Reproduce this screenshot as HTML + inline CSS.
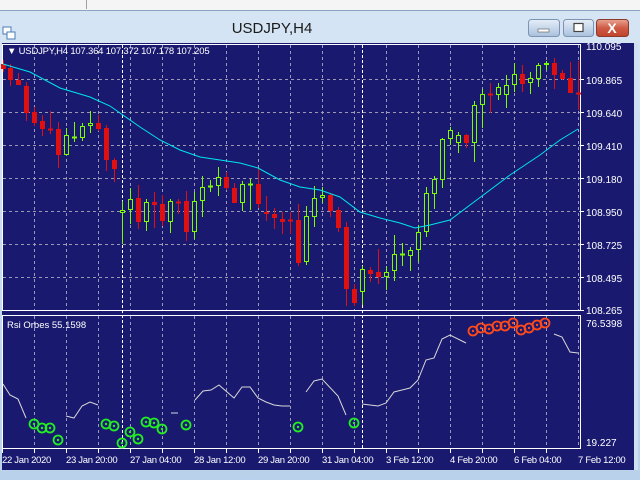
<!DOCTYPE html>
<html><head><meta charset="utf-8"><style>
html,body{margin:0;padding:0;width:640px;height:480px;overflow:hidden;background:#f0f0f0;font-family:"Liberation Sans",sans-serif}
svg{position:absolute;left:0;top:0}
</style></head><body>
<svg id="s" width="640" height="480" xmlns="http://www.w3.org/2000/svg" font-family="Liberation Sans, sans-serif">
<defs>
<linearGradient id="tb" x1="0" y1="0" x2="0" y2="1"><stop offset="0" stop-color="#d6e5f4"/><stop offset="1" stop-color="#b9d1ea"/></linearGradient>
<linearGradient id="bt" x1="0" y1="0" x2="0" y2="1"><stop offset="0" stop-color="#e6eef8"/><stop offset="1" stop-color="#a9c1dd"/></linearGradient>
<linearGradient id="cl" x1="0" y1="0" x2="0" y2="1"><stop offset="0" stop-color="#e8a593"/><stop offset="0.5" stop-color="#cf5b45"/><stop offset="1" stop-color="#c0432c"/></linearGradient>
</defs>
<rect x="0" y="0" width="640" height="10" fill="#f5f5f5"/>
<line x1="86.5" y1="0" x2="86.5" y2="9" stroke="#a0a0a0"/>
<rect x="0" y="10" width="640" height="470" fill="url(#tb)"/>
<line x1="0" y1="10.5" x2="640" y2="10.5" stroke="#8aa4c2"/>
<g transform="translate(3,27)">
<rect x="0" y="0" width="8" height="7" fill="#fff" stroke="#4a7bb5" stroke-width="1"/>
<rect x="4" y="5" width="8" height="7" fill="#fff" stroke="#4a7bb5" stroke-width="1"/>
</g>
<text x="272" y="33" font-size="15" fill="#1a1a1a" text-anchor="middle">USDJPY,H4</text>
<rect x="528.5" y="19.5" width="31" height="17" rx="3" fill="url(#bt)" stroke="#7c93b2"/>
<rect x="538" y="29" width="11" height="3" fill="#fff" stroke="#555" stroke-width="0.6"/>
<rect x="563.5" y="19.5" width="30" height="17" rx="3" fill="url(#bt)" stroke="#7c93b2"/>
<rect x="574" y="23.5" width="9" height="8" fill="#fff" stroke="#444" stroke-width="1.2"/>
<rect x="596.5" y="19.5" width="32" height="17" rx="3" fill="url(#cl)" stroke="#8b3a2c"/>
<text x="612" y="33" font-size="14" font-weight="bold" fill="#fff" text-anchor="middle">X</text>
<rect x="2" y="43" width="632" height="427" fill="#191970"/>
<rect x="634" y="43" width="4" height="427" fill="#cfe0f1"/>
<g id="grid"></g>
<rect x="2.5" y="44.5" width="578" height="266" fill="none" stroke="#ffffff" stroke-width="1"/>
<rect x="2.5" y="315.5" width="578" height="133" fill="none" stroke="#ffffff" stroke-width="1"/>
<g id="main"></g>
<g id="ind"></g>
<g fill="#fff" font-size="10">
<text x="7" y="54" font-size="9.5" letter-spacing="-0.2">▼ USDJPY,H4  107.364 107.372 107.178 107.205</text>
<text x="586" y="50">110.095</text>
<text x="586" y="84">109.865</text>
<text x="586" y="117">109.640</text>
<text x="586" y="150">109.410</text>
<text x="586" y="183">109.180</text>
<text x="586" y="216">108.950</text>
<text x="586" y="249">108.725</text>
<text x="586" y="282">108.495</text>
<text x="586" y="314">108.265</text>
<text x="586" y="327">76.5398</text>
<text x="586" y="446">19.227</text>
<text x="7" y="328" font-size="9.5">Rsi Orbes 55.1598</text>
<g font-size="9.5" letter-spacing="-0.3">
<text x="2" y="463">22 Jan 2020</text>
<text x="66" y="463">23 Jan 20:00</text>
<text x="130" y="463">27 Jan 04:00</text>
<text x="194" y="463">28 Jan 12:00</text>
<text x="258" y="463">29 Jan 20:00</text>
<text x="322" y="463">31 Jan 04:00</text>
<text x="386" y="463">3 Feb 12:00</text>
<text x="450" y="463">4 Feb 20:00</text>
<text x="514" y="463">6 Feb 04:00</text>
<text x="578" y="463">7 Feb 12:00</text>
</g>
</g>
</svg>
<script>
var NS="http://www.w3.org/2000/svg";
function el(p,t,a){var e=document.createElementNS(NS,t);for(var k in a)e.setAttribute(k,a[k]);document.getElementById(p).appendChild(e);return e;}
for(var x=34;x<=578;x+=32){
 el("grid","line",{x1:x+.5,y1:45,x2:x+.5,y2:310,stroke:"#9a9ab4","stroke-dasharray":"3,3"});
 el("grid","line",{x1:x+.5,y1:316,x2:x+.5,y2:448,stroke:"#9a9ab4","stroke-dasharray":"3,3"});
 el("grid","line",{x1:x-31.5,y1:449,x2:x-31.5,y2:453,stroke:"#fff"});
}
[79,112,145,178,211,244,277,310].forEach(function(y){el("grid","line",{x1:3,y1:y+.5,x2:580,y2:y+.5,stroke:"#9a9ab4","stroke-dasharray":"3,3"});
el("grid","line",{x1:580,y1:y+.5,x2:584,y2:y+.5,stroke:"#fff"});});
[122,362].forEach(function(x){el("grid","line",{x1:x+.5,y1:45,x2:x+.5,y2:448,stroke:"#fff","stroke-dasharray":"3,2"});});
var C=[[3,'r',64,69,60,72],[10,'r',68,80,64,86],[18,'r',80,85,73,85],[26,'r',86,113,82,121],[34,'r',112,123,107,126],[42,'r',121,129,115,136],[50,'r',129,129,111,134],[58,'r',129,155,122,168],[66,'g',135,155,128,155],[74,'g',137,137,122,142],[82,'g',126,138,123,141],[90,'g',123,126,111,133],[98,'r',123,129,115,131],[106,'r',128,160,125,171],[114,'r',160,169,158,182],[122,'g',210,213,201,244],[130,'g',199,210,188,224],[138,'r',198,222,185,229],[146,'g',202,222,199,231],[154,'r',202,205,192,228],[162,'r',204,221,195,226],[170,'g',201,222,199,233],[178,'r',202,202,199,214],[186,'r',201,232,191,241],[194,'g',201,232,192,239],[202,'g',187,201,176,217],[210,'g',186,186,180,192],[218,'g',177,186,167,196],[226,'r',177,188,172,190],[234,'r',188,203,183,203],[242,'g',184,203,181,211],[250,'g',184,184,179,210],[258,'r',184,204,168,208],[266,'r',212,214,196,221],[274,'r',214,218,208,229],[282,'r',219,222,212,234],[290,'r',220,220,212,234],[298,'r',220,263,204,266],[306,'g',216,262,206,265],[314,'g',198,217,186,227],
[322,'g',195,198,187,203],[330,'r',195,211,193,217],[338,'r',210,228,207,232],[346,'r',227,289,222,306],[354,'r',289,303,284,306],[362,'g',269,292,266,305],[370,'r',270,274,267,282],[378,'r',272,277,249,284],[386,'g',272,277,266,290],[394,'g',254,271,235,281],[402,'g',254,254,243,266],[410,'g',250,256,247,271],[418,'g',232,250,225,262],[426,'g',193,232,187,237],[434,'g',179,194,176,209],[442,'g',139,180,138,188],[450,'g',130,139,127,145],[458,'g',135,143,132,153],[466,'r',135,143,134,148],[474,'g',105,143,101,162],[482,'g',94,105,89,128],[490,'r',94,94,83,113],[498,'g',87,95,83,100],[506,'g',85,95,75,108],[514,'g',74,85,63,92],[522,'r',74,84,65,92],[530,'g',78,83,72,94],[538,'g',65,79,63,87],[546,'g',63,65,61,70],[554,'r',63,75,58,89],[562,'r',73,79,70,80],[570,'r',78,93,62,93],[578,'r',93,93,61,110]];
C.forEach(function(c){var col=c[1]=='r'?'#e01010':'#7cfc00';
 el("main","line",{x1:c[0]+.5,y1:c[4],x2:c[0]+.5,y2:c[5],stroke:col});
 var h=c[3]-c[2];
 if(h<2){el("main","line",{x1:c[0]-2,y1:c[2]+.5,x2:c[0]+3,y2:c[2]+.5,stroke:col,"stroke-width":2});}
 else if(c[1]=='r'){el("main","rect",{x:c[0]-2,y:c[2],width:5,height:h,fill:col});}
 else{el("main","rect",{x:c[0]-1.5,y:c[2]+.5,width:4,height:h-1,fill:"#191970",stroke:col});}
});
var ma=[[3,64],[30,72],[60,88],[90,97],[110,106],[120,113],[140,127],[160,140],[180,150],[200,157],[220,160],[240,163],[258,168],[280,180],[300,187],[320,190],[340,197],[360,212],[380,218],[400,223],[415,228],[430,225],[450,220],[470,205],[490,190],[510,175],[540,155],[560,140],[578,129]];
el("main","polyline",{points:ma.map(function(p){return p.join(',')}).join(' '),fill:"none",stroke:"#00e5ee","stroke-width":1});
var R=[[[3,384],[10,395],[18,399],[26,418]],[[66,416],[74,418],[82,406],[90,402],[98,405]],[[171,413],[178,413]],[[195,400],[203,391],[211,390],[219,385],[234,398],[242,387],[250,387],[258,398],[266,402],[274,405],[282,406],[290,406]],[[306,392],[314,381],[322,379],[338,396],[346,415]],[[362,404],[370,405],[378,406],[386,403],[394,392],[402,390],[410,388],[418,380],[426,360],[434,358],[442,339],[450,335],[466,343]],[[554,334],[562,337],[570,352],[578,353]]];
R.forEach(function(s){el("ind","polyline",{points:s.map(function(p){return p.join(',')}).join(' '),fill:"none",stroke:"#d8d8d8","stroke-width":1});});
var G=[[34,424],[42,428],[50,428],[58,440],[106,424],[114,426],[122,443],[130,432],[138,439],[146,422],[154,423],[162,429],[186,425],[298,427],[354,423]];
G.forEach(function(p){el("ind","circle",{cx:p[0],cy:p[1],r:4.5,fill:"none",stroke:"#22ee22","stroke-width":1.8});el("ind","circle",{cx:p[0],cy:p[1],r:1.2,fill:"#22ee22"});});
var O=[[473,331],[481,328],[489,329],[497,326],[505,326],[513,323],[521,330],[529,328],[537,325],[545,323]];
O.forEach(function(p){el("ind","circle",{cx:p[0],cy:p[1],r:4.5,fill:"none",stroke:"#ff4a1a","stroke-width":1.8});el("ind","circle",{cx:p[0],cy:p[1],r:1.2,fill:"#ff4a1a"});});
</script>
</body></html>
